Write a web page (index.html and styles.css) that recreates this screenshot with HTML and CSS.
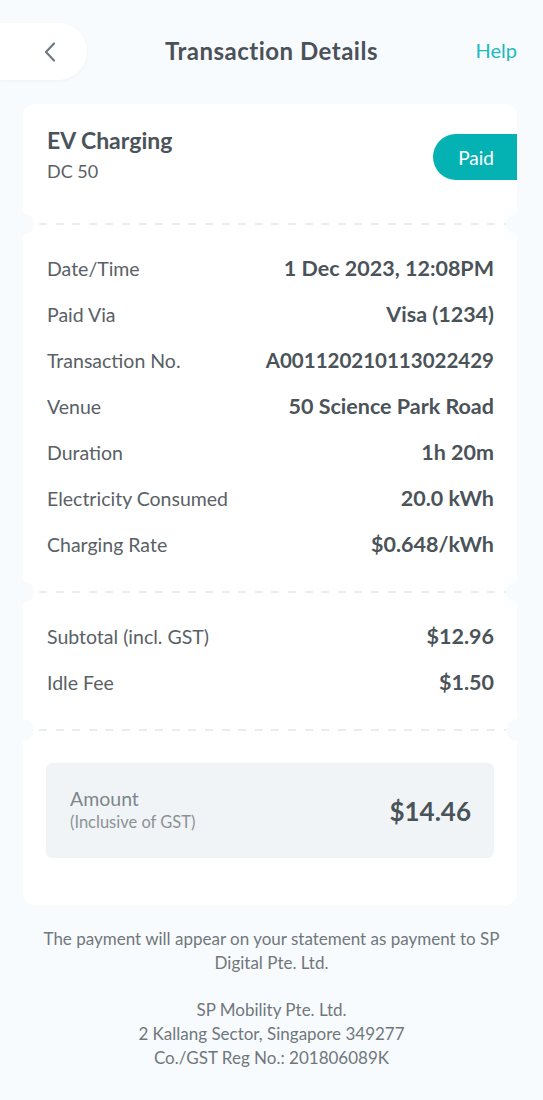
FILE: index.html
```html
<!DOCTYPE html>
<html>
<head>
<meta charset="utf-8">
<link rel="stylesheet" href="styles.css">
</head>
<body>
<div class="page">
  <header class="topbar">
    <div class="back-wrap">
      <button class="back" aria-label="Back">
        <svg width="12" height="20" viewBox="0 0 12 20"><path d="M10 1.5 L2 10 L10 18.5" fill="none" stroke="#6e7a82" stroke-width="2.2" stroke-linecap="round" stroke-linejoin="round"/></svg>
      </button>
    </div>
    <h1 class="title">Transaction Details</h1>
    <div class="help-wrap"><a class="help">Help</a></div>
  </header>

  <main class="card">
    <section class="sec sec-head">
      <div class="head-text">
        <div class="product">EV Charging</div>
        <div class="model">DC 50</div>
      </div>
      <span class="badge">Paid</span>
    </section>
    <div class="divider"></div>
    <section class="sec sec-rows">
      <div class="row"><span class="label">Date/Time</span><span class="value">1 Dec 2023, 12:08PM</span></div>
      <div class="row"><span class="label">Paid Via</span><span class="value">Visa (1234)</span></div>
      <div class="row"><span class="label">Transaction No.</span><span class="value num">A001120210113022429</span></div>
      <div class="row"><span class="label">Venue</span><span class="value">50 Science Park Road</span></div>
      <div class="row"><span class="label">Duration</span><span class="value">1h 20m</span></div>
      <div class="row"><span class="label">Electricity Consumed</span><span class="value">20.0 kWh</span></div>
      <div class="row"><span class="label">Charging Rate</span><span class="value">$0.648/kWh</span></div>
    </section>
    <div class="divider"></div>
    <section class="sec sec-rows">
      <div class="row"><span class="label">Subtotal (incl. GST)</span><span class="value">$12.96</span></div>
      <div class="row"><span class="label">Idle Fee</span><span class="value">$1.50</span></div>
    </section>
    <div class="divider"></div>
    <section class="sec sec-total">
      <div class="total-box">
        <div class="total-label">
          <div class="t-main">Amount</div>
          <div class="t-sub">(Inclusive of GST)</div>
        </div>
        <div class="total-value">$14.46</div>
      </div>
    </section>
  </main>

  <footer class="foot">
    <p>The payment will appear on your statement as payment to SP Digital Pte. Ltd.</p>
    <p>SP Mobility Pte. Ltd.<br>2 Kallang Sector, Singapore 349277<br>Co./GST Reg No.: 201806089K</p>
  </footer>
</div>
</body>
</html>
```

FILE: styles.css
```css
* { box-sizing: border-box; }
html, body {
  margin: 0;
  padding: 0;
  background: #f8fbfd;
}
body {
  font-family: Lato, "Noto Sans", sans-serif;
  color: #4a5359;
}
.page {
  width: 543px;
  min-height: 1100px;
}
.topbar {
  display: grid;
  grid-template-columns: 1fr auto 1fr;
  align-items: center;
  padding-top: 23px;
  height: 80px;
}
.back-wrap { display: flex; }
.back {
  width: 87px;
  height: 57px;
  border: none;
  background: #ffffff;
  border-radius: 0 29px 29px 0;
  box-shadow: 0 1px 3px rgba(60, 80, 100, 0.06);
  display: flex;
  align-items: center;
  padding: 0 0 0 44px;
  cursor: pointer;
}
.title {
  margin: 0 0 3px;
  font-size: 24px;
  font-weight: 700;
  color: #4a5258;
  letter-spacing: 0.5px;
}
.help-wrap {
  display: flex;
  justify-content: flex-end;
  padding-right: 26px;
}
.help {
  font-size: 20px;
  color: #22b8bd;
  margin-bottom: 3px;
}
.card {
  margin: 24px 26px 0 23px;
  background: #ffffff;
  border-radius: 12px;
  display: flex;
  flex-direction: column;
}
.sec-head {
  display: flex;
  justify-content: space-between;
  align-items: flex-start;
  padding: 22px 0 40px 24px;
  height: 119px;
}
.product {
  font-size: 23px;
  font-weight: 700;
  line-height: 28px;
  color: #4a5359;
}
.model {
  font-size: 18px;
  line-height: 24px;
  margin-top: 5px;
  color: #596166;
}
.badge {
  margin-top: 8px;
  width: 84px;
  height: 46px;
  border-radius: 23px 0 0 23px;
  background: #04b2b3;
  color: #ffffff;
  font-size: 19px;
  display: flex;
  align-items: center;
  justify-content: center;
  padding-left: 2px;
}
.divider {
  position: relative;
  height: 2px;
  margin: 0 10px 0 16px;
  background: repeating-linear-gradient(90deg, #e8edf0 0 8px, transparent 8px 16.6px);
}
.divider::before,
.divider::after {
  content: "";
  position: absolute;
  top: 50%;
  width: 22px;
  height: 22px;
  margin-top: -11px;
  border-radius: 50%;
  background: #f8fbfd;
}
.divider::before { left: -27px; }
.divider::after { right: -21px; }
.sec-rows {
  padding: 20px 23px 24px 24px;
}
.row {
  display: flex;
  justify-content: space-between;
  align-items: center;
  height: 46px;
}
.label {
  font-size: 19.5px;
  color: #596166;
}
.value {
  font-size: 21.5px;
  font-weight: 700;
  color: #4a5359;
}
.value.num {
  font-size: 20.5px;
}
.sec-total {
  padding: 32px 23px 47px 23px;
}
.total-box {
  height: 95px;
  background: #f1f4f6;
  border-radius: 6px;
  display: flex;
  align-items: center;
  justify-content: space-between;
  padding: 0 23px 0 24px;
}
.t-main {
  font-size: 19.5px;
  line-height: 23px;
  color: #7d868c;
}
.t-sub {
  font-size: 16.5px;
  line-height: 24px;
  color: #8a9297;
}
.total-value {
  font-size: 26px;
  font-weight: 700;
  color: #4a5359;
}
.foot {
  padding: 22px 30px 0;
  text-align: center;
  font-size: 17px;
  line-height: 24px;
  color: #70777c;
}
.foot p { margin: 0 0 23px; }
```
